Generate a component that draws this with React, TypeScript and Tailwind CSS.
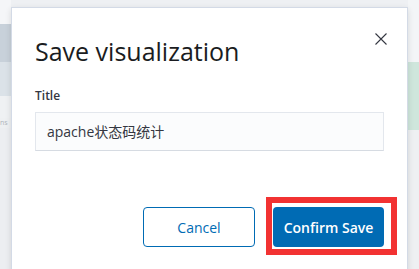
export default function App() {
  const font = {
    fontFamily: '"Open Sans", "Noto Sans CJK SC", sans-serif',
  };

  return (
    <div
      className="relative w-[419px] h-[269px] overflow-hidden bg-[#eef0f3] flex"
      style={font}
    >
      {/* page behind the modal */}
      <div className="w-[11px] flex flex-col">
        <div className="h-[24px] bg-[#f5f6f8]" />
        <div className="h-[38px] bg-[#c8d1da]" />
        <div className="h-[34px] bg-[#dbe2e8]" />
        <div className="h-[22px] bg-[#eff1f3]" />
        <div className="h-[10px] bg-[#eef0f2] text-[7px] leading-[10px] text-[#b0b6bd]">
          ns
        </div>
        <div className="flex-1 bg-[#eceef1]" />
      </div>
      <div className="flex-1" />
      <div className="w-[11px] flex flex-col">
        <div className="h-[62px] bg-[#f3f5f7]" />
        <div className="h-[68px] bg-[#cfe6dc]" />
        <div className="flex-1 bg-[#eef0f2]" />
      </div>

      {/* modal */}
      <div className="absolute left-[11px] top-[7px] w-[397px] h-[280px] bg-white border border-[#d3dae6] shadow-[0_2px_6px_rgba(0,0,0,0.12)] flex flex-col px-[23px]">
        <div className="pt-[25px] h-[62px]">
          <h2 className="text-[25px] leading-[36px] text-[#1a1c21]">
            Save visualization
          </h2>
        </div>
        <button className="absolute left-[361px] top-[23px] w-[16px] h-[16px] flex items-center justify-center text-[#343741]">
          <svg width="16" height="16" viewBox="0 0 16 16" fill="none">
            <path d="M2.5 2.5l11 11M13.5 2.5l-11 11" stroke="currentColor" strokeWidth="1.1" />
          </svg>
        </button>

        <label className="mt-[17px] text-[12px] leading-[18px] font-semibold text-[#343741]">
          Title
        </label>
        <div className="mt-[7px] h-[39px] w-[349px] bg-[#fbfcfd] border border-[#e3e7ed] border-b-[#d6dbe2] flex items-center pl-[11px] text-[14px] text-[#343741]">
          apache状态码统计
        </div>

        <div className="mt-[56px] flex justify-end gap-[18px]">
          <button className="w-[112px] h-[40px] rounded-[4px] border border-[#006bb4] text-[#006bb4] text-[14px]">
            Cancel
          </button>
          <div className="relative">
            <button className="w-[111px] h-[40px] rounded-[4px] bg-[#006bb4] text-white text-[14px] font-semibold">
              Confirm Save
            </button>
            <div className="absolute -left-[7px] -top-[10px] -right-[13px] -bottom-[8px] border-[6px] border-[#f23232] pointer-events-none" />
          </div>
        </div>
      </div>
    </div>
  );
}
